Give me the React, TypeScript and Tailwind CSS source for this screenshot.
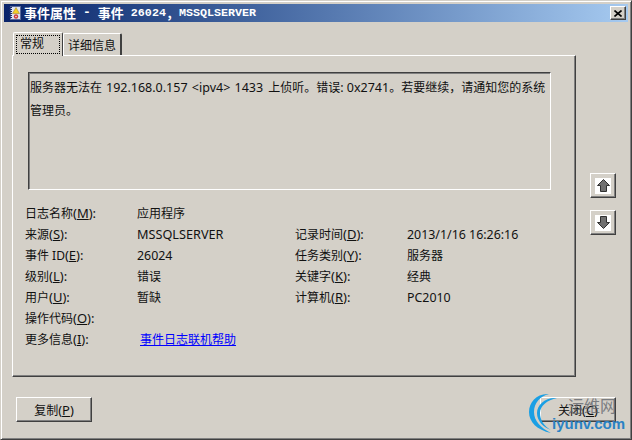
import React from 'react';

const rows = [
  ['来源', 'S', 'MSSQLSERVER', '记录时间', 'D', '2013/1/16 16:26:16'],
  ['事件 ID', 'E', '26024', '任务类别', 'Y', '服务器'],
  ['级别', 'L', '错误', '关键字', 'K', '经典'],
  ['用户', 'U', '暂缺', '计算机', 'R', 'PC2010'],
];

const Label = ({ a, k }: { a: string; k: string }) => (
  <span>
    {a}
    <span className="text-[13px]">
      (<span className="underline">{k}</span>):
    </span>
  </span>
);

const Value = ({ v }: { v: string }) => {
  if (v === 'MSSQLSERVER') return <span className="text-[12.7px]">{v}</span>;
  if (/[0-9]/.test(v)) return <span className="text-[12.4px]">{v}</span>;
  return <span>{v}</span>;
};

const raised =
  'border border-t-white border-l-white border-r-[#404040] border-b-[#404040] shadow-[inset_-1px_-1px_0_#808080]';

export default function App() {
  return (
    <div className="relative w-[632px] h-[440px] overflow-hidden bg-[#d4d0c8] text-[12px] leading-[21px] text-[#111] font-['Noto_Sans','Noto_Sans_CJK_SC',sans-serif]">
      <div className="h-full flex flex-col border border-t-[#d4d0c8] border-l-[#d4d0c8] border-r-[#404040] border-b-[#404040] shadow-[inset_1px_1px_0_#fff,inset_-1px_-1px_0_#808080] p-[3px]">
        {/* Title bar */}
        <div className="h-[18px] shrink-0 flex items-center bg-gradient-to-r from-[#0a246a] to-[#a6caf0] pl-[5px] pr-[2px] text-white">
          <svg width="12" height="14" viewBox="0 0 12 14" className="shrink-0">
            <rect x="1.5" y="0.5" width="10" height="13" fill="#dfe4f2" stroke="#5a6a9a" />
            <path d="M1.5 1v12" stroke="#1c2c6a" strokeWidth="3" strokeDasharray="1 1" />
            <path d="M7 1.5l3.5 6h-7z" fill="#f6cf24" stroke="#9a7a18" strokeWidth="0.5" />
            <circle cx="7" cy="10.5" r="2.2" fill="#cf3a3a" />
            <circle cx="7" cy="10.5" r="0.8" fill="#f4e4e4" />
          </svg>
          <span className="ml-[3px] font-bold text-[13px] leading-[18px]">事件属性</span>
          <span className="ml-[7px] font-['Liberation_Mono',monospace] font-bold text-[13px] leading-[18px]">-</span>
          <span className="ml-[7px] font-bold text-[13px] leading-[18px]">事件</span>
          <span className="ml-[7px] font-['Liberation_Mono',monospace] font-bold text-[11.7px] leading-[18px]">26024</span>
          <span className="font-bold text-[13px] leading-[18px]">，</span>
          <span className="font-['Liberation_Mono',monospace] font-bold text-[11.7px] leading-[18px]">MSSQLSERVER</span>
          <div className={`ml-auto w-[16px] h-[14px] bg-[#d4d0c8] ${raised} flex items-center justify-center`}>
            <svg width="8" height="7" viewBox="0 0 8 7">
              <path d="M0.5 0.5l7 6M7.5 0.5l-7 6" stroke="#000" strokeWidth="1.6" fill="none" />
            </svg>
          </div>
        </div>

        {/* Tabs */}
        <div className="mt-[10px] ml-[9px] flex items-end h-[23px] shrink-0 relative z-10">
          <div className="h-[24px] w-[50px] -mb-px bg-[#d4d0c8] border-t border-l border-white rounded-t-[2px] border-r border-r-[#404040] p-[2px]">
            <div className="h-[19px] border border-dotted border-black leading-[15px] pl-[3px]">常规</div>
          </div>
          <div className="h-[22px] w-[59px] bg-[#d4d0c8] border-t border-l border-white border-r-2 border-r-[#404040] rounded-t-[2px] pl-[4px] leading-[23px]">
            详细信息
          </div>
        </div>

        {/* Panel + side buttons */}
        <div className="flex ml-[8px] items-start shrink-0">
          <div className="w-[564px] h-[322px] border border-t-white border-l-white border-r-[#404040] border-b-[#404040] shadow-[inset_-1px_-1px_0_#808080] pt-[16px] px-[12px]">
            <div className="ml-[3px] w-[523px] h-[118px] border border-t-[#404040] border-l-[#404040] border-r-white border-b-white shadow-[inset_1px_1px_0_#808080] pt-[3px] pl-[1px] leading-[23px] whitespace-nowrap">
              服务器无法在
              <span className="ml-[4px] mr-[5px] text-[12.5px] [word-spacing:1px]">192.168.0.157 &lt;ipv4&gt; 1433</span>
              上侦听。错误
              <span className="text-[12.5px]">: 0x2741</span>
              。若要继续，请通知您的系统
              <br />
              管理员。
            </div>
            <div className="mt-[13px] grid grid-cols-[112px_158px_112px_1fr] auto-rows-[21px]">
              <Label a="日志名称" k="M" />
              <span className="col-span-3">应用程序</span>
              {rows.map((r) => (
                <React.Fragment key={r[1]}>
                  <Label a={r[0]} k={r[1]} />
                  <Value v={r[2]} />
                  <Label a={r[3]} k={r[4]} />
                  <Value v={r[5]} />
                </React.Fragment>
              ))}
              <span className="col-span-4">
                <Label a="操作代码" k="O" />
              </span>
              <Label a="更多信息" k="I" />
              <span className="col-span-3 pl-[3px] text-[#0000ff] underline">事件日志联机帮助</span>
            </div>
          </div>
          <div className="ml-[14px] mt-[118px] flex flex-col gap-[12px]">
            <div className={`w-[26px] h-[25px] ${raised} flex items-center justify-center`}>
              <div className="w-[16px] h-[16px] bg-white flex items-center justify-center">
                <svg width="13" height="13" viewBox="0 0 13 13">
                  <path d="M6.5 0.5L12.5 6.5H9.5V12.5H3.5V6.5H0.5z" fill="#707070" stroke="#303030" />
                </svg>
              </div>
            </div>
            <div className={`w-[26px] h-[25px] ${raised} flex items-center justify-center`}>
              <div className="w-[16px] h-[16px] bg-white flex items-center justify-center">
                <svg width="13" height="13" viewBox="0 0 13 13">
                  <path d="M6.5 12.5L12.5 6.5H9.5V0.5H3.5V6.5H0.5z" fill="#707070" stroke="#303030" />
                </svg>
              </div>
            </div>
          </div>
        </div>

        {/* Footer buttons */}
        <div className="mt-[20px] ml-[12px] flex justify-between w-[600px] shrink-0">
          <div className={`w-[76px] h-[25px] ${raised} text-center leading-[24px]`}>
            复制<span className="text-[13px]">(<span className="underline">P</span>)</span>
          </div>
          <div className={`w-[76px] h-[25px] ${raised} text-center leading-[24px]`}>
            关闭<span className="text-[13px]">(<span className="underline">C</span>)</span>
          </div>
        </div>
      </div>

      {/* iyunv.com watermark */}
      <div className="absolute left-[529px] top-[393px] w-[103px] h-[47px] pointer-events-none">
        <svg width="32" height="42" viewBox="0 0 32 42" className="absolute left-0 top-0">
          <path d="M20 1C8 0 0 9 0 19c0 10 8 18 22 21C12 35 5 28 5 19 5 10 11 3 20 1z" fill="#1a9fe4" />
          <path d="M28 5C16 4 8 12 8 20c0 8 6 14 14 17C15 33 11 27 11 20c0-7 7-13 17-15z" fill="#1a9fe4" />
        </svg>
        <span className="absolute left-[39px] top-0 text-[16px] leading-[24px] text-[#5c6068] opacity-75 font-['Noto_Sans_CJK_SC',sans-serif]">运维网</span>
        <span className="absolute left-[23px] top-[20px] text-[15px] leading-[22px] font-bold text-[#2a82c4] font-['Liberation_Sans',sans-serif]">iyunv.com</span>
      </div>
    </div>
  );
}
